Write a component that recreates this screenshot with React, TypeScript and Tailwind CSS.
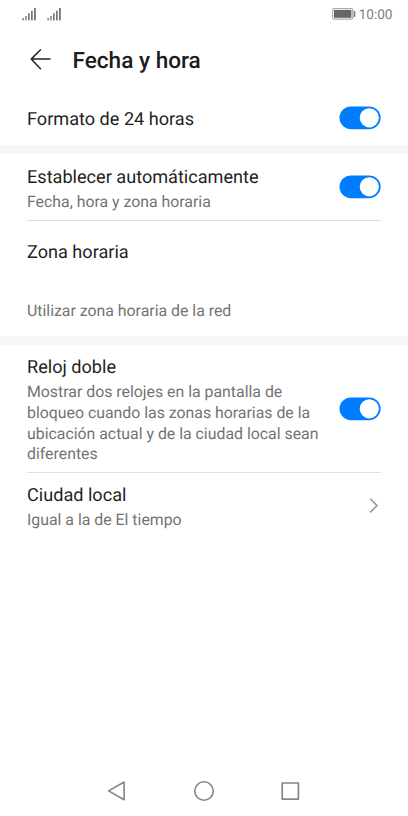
import type { ReactNode } from "react";

function Signal() {
  return (
    <svg width="14" height="13" viewBox="0 0 14 13" fill="#6b6b6b">
      <rect x="0.5" y="10" width="1.3" height="2.4" />
      <rect x="3.3" y="8" width="1.3" height="4.4" />
      <rect x="6.1" y="5.2" width="1.5" height="7.2" />
      <rect x="9.1" y="2.8" width="1.6" height="9.6" />
      <rect x="12.1" y="0" width="1.7" height="12.4" />
    </svg>
  );
}

function StatusBar() {
  return (
    <div className="flex h-7 items-center justify-between pr-[15.5px] pl-[22px]">
      <div className="flex gap-[11px]">
        <Signal />
        <Signal />
      </div>
      <div className="flex items-center gap-[3px]">
        <svg width="24" height="12" viewBox="0 0 24 12">
          <rect x="0.7" y="0.7" width="20" height="10.4" rx="1.2" fill="#fff" stroke="#aaa" strokeWidth="1.2" />
          <rect x="2" y="2" width="17.4" height="7.8" fill="#666" />
          <rect x="21.7" y="3" width="1.6" height="6" rx="0.6" fill="#777" />
        </svg>
        <span className="pt-px text-[13.6px] leading-[28px] text-[#808080]">10:00</span>
      </div>
    </div>
  );
}

function Toggle() {
  return (
    <svg className="shrink-0" width="42" height="24" viewBox="0 0 42 24">
      <rect x="0.5" y="0.4" width="41.1" height="22.8" rx="11.4" fill="#007dff" />
      <circle cx="30.3" cy="11.8" r="9.6" fill="#fff" />
    </svg>
  );
}

function Title({ children }: { children: ReactNode }) {
  return <div className="pt-px text-[18.12px] leading-6 whitespace-nowrap text-[#1f1f1f]">{children}</div>;
}

function Detail({ children }: { children: ReactNode }) {
  return <div className="text-[15.85px] leading-[20.6px] whitespace-nowrap text-[#737373]">{children}</div>;
}

export default function App() {
  return (
    <div className="flex h-[816px] w-[408px] flex-col bg-white font-[Roboto,sans-serif] [text-rendering:geometricPrecision]">
      <StatusBar />
      <header className="flex h-[63px] items-center pl-[30px]">
        <svg width="22" height="22" viewBox="0 0 22 22" fill="none" stroke="#222" strokeWidth="1.5" strokeLinecap="round" strokeLinejoin="round">
          <path d="M20 10.1H1.2M10.5 0.8L1.2 10.1L10.5 19.7" />
        </svg>
        <h1 className="ml-[20.5px] pt-[2px] text-[22.6px] leading-8 font-medium text-[#1c1c1c]">Fecha y hora</h1>
      </header>
      <div className="flex h-[54px] items-center justify-between pr-[27px] pl-[27px]">
        <div className="pt-[2px]">
          <Title>Formato de 24 horas</Title>
        </div>
        <Toggle />
      </div>
      <div className="h-[9px] bg-[#f6f6f6]" />
      <section className="h-[182px] px-[27px]">
        <div className="flex h-[67px] items-center justify-between border-b border-[#e0e0e0]">
          <div className="flex flex-col gap-[2px] pt-[3px]">
            <Title>Establecer automáticamente</Title>
            <Detail>Fecha, hora y zona horaria</Detail>
          </div>
          <Toggle />
        </div>
        <div className="pt-[19px]">
          <Title>Zona horaria</Title>
        </div>
        <div className="pt-[36px]">
          <Detail>Utilizar zona horaria de la red</Detail>
        </div>
      </section>
      <div className="h-[9px] bg-[#f6f6f6]" />
      <section className="px-[27px]">
        <div className="flex h-[128px] items-center justify-between border-b border-[#e0e0e0]">
          <div className="flex flex-col gap-[2px] pt-[3px]">
            <Title>Reloj doble</Title>
            <Detail>
              Mostrar dos relojes en la pantalla de
              <br />
              bloqueo cuando las zonas horarias de la
              <br />
              ubicación actual y de la ciudad local sean
              <br />
              diferentes
            </Detail>
          </div>
          <Toggle />
        </div>
        <div className="flex h-[65px] items-center justify-between">
          <div className="flex flex-col gap-[2px] pt-[3px]">
            <Title>Ciudad local</Title>
            <Detail>Igual a la de El tiempo</Detail>
          </div>
          <svg className="mr-[2px]" width="10" height="16" viewBox="0 0 10 16" fill="none" stroke="#999" strokeWidth="1.6">
            <path d="M1.2 0.8L8 7.6L1.2 14.4" />
          </svg>
        </div>
      </section>
      <nav className="mt-auto flex h-[51px] items-center justify-between px-[107px]">
        <svg width="20" height="22" viewBox="0 0 20 22" fill="none" stroke="#858585" strokeWidth="1.6" strokeLinejoin="round">
          <path d="M17.1 2V19.8L1.6 10.9Z" />
        </svg>
        <svg width="22" height="22" viewBox="0 0 22 22" fill="none" stroke="#858585" strokeWidth="1.6">
          <circle cx="11" cy="11" r="9.2" />
        </svg>
        <svg width="20" height="20" viewBox="0 0 20 20" fill="none" stroke="#858585" strokeWidth="1.7" strokeLinejoin="round">
          <rect x="1.2" y="2" width="16.2" height="16.2" />
        </svg>
      </nav>
    </div>
  );
}
